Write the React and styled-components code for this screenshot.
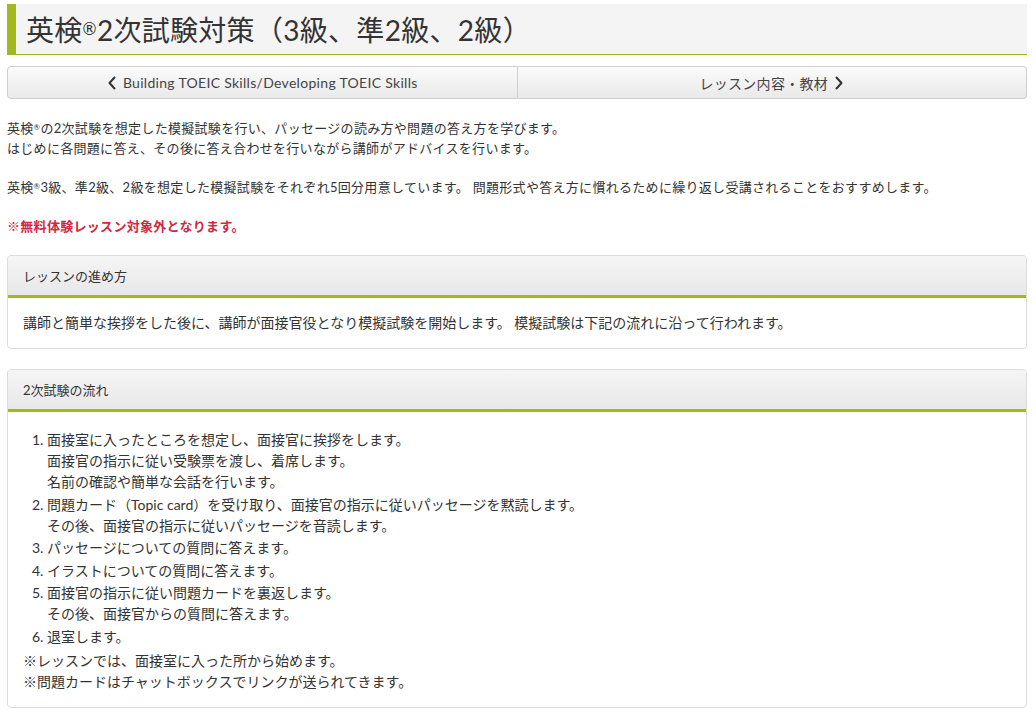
import React from "react";
import styled, { createGlobalStyle } from "styled-components";

const GlobalStyle = createGlobalStyle`
  body {
    margin: 0;
    background: #fff;
    color: #333;
    font-family: Lato, "Noto Sans CJK JP", sans-serif;
  }
`;

const Page = styled.div`
  width: 1020px;
  margin-left: 7px;
  padding-top: 4px;
`;

const Title = styled.h1`
  margin: 0;
  height: 50px;
  display: flex;
  align-items: center;
  padding-left: 10px;
  background: #f4f4f4;
  border-left: 9px solid #a3b81c;
  border-bottom: 1px solid #a3b81c;
  font-size: 28px;
  font-weight: normal;
  color: #333;
  letter-spacing: 0.3px;
`;

const Sup = styled.span`
  font-size: 0.6em;
  vertical-align: 0.35em;
  line-height: 0;
`;

const Nav = styled.div`
  display: flex;
  margin-top: 11px;
  height: 33px;
`;

const NavButton = styled.a`
  flex: 1;
  display: flex;
  align-items: center;
  justify-content: center;
  gap: 6px;
  font-size: 14px;
  letter-spacing: 0.3px;
  color: #444;
  text-decoration: none;
  background: linear-gradient(#fbfbfb, #e9e9e9);
  border: 1px solid #cfcfcf;
  border-radius: ${(p) => (p.$side === "left" ? "4px 0 0 4px" : "0 4px 4px 0")};
  ${(p) => (p.$side === "right" ? "border-left: none;" : "")}
  box-sizing: border-box;
`;

const Intro = styled.div`
  margin-top: 19px;
  font-size: 13px;
  line-height: 20px;
  letter-spacing: 0.3px;
`;

const Para = styled.p`
  margin: 0 0 19px;
`;

const Notice = styled.p`
  margin: 0;
  color: #d2283f;
  font-weight: bold;
`;

const Panel = styled.section`
  margin-top: ${(p) => p.$top || 19}px;
  border: 1px solid #dcdcdc;
  border-radius: 4px;
  overflow: hidden;
`;

const PanelHead = styled.div`
  height: 39px;
  display: flex;
  align-items: center;
  padding-left: 15px;
  font-size: 13px;
  background: linear-gradient(#f5f5f5, #e8e8e8);
  border-bottom: 3px solid #a3b81c;
`;

const PanelBody = styled.div`
  padding: ${(p) => p.$pad || "14px 15px 15px"};
  font-size: 14px;
  line-height: 21px;
`;

const Steps = styled.ol`
  margin: 0;
  padding-left: 24px;
`;

const Step = styled.li`
  margin-bottom: 1.5px;
  line-height: 21px;
`;

const Note = styled.div`
  line-height: 21px;
`;

const NoteGroup = styled.div`
  margin-top: 3px;
`;

const Chevron = ({ dir }) => (
  <svg width="10" height="14" viewBox="0 0 10 14" fill="none">
    <path
      d={dir === "left" ? "M7.5 1.5 L2.5 7 L7.5 12.5" : "M2.5 1.5 L7.5 7 L2.5 12.5"}
      stroke="#333"
      strokeWidth="2"
      strokeLinecap="round"
      strokeLinejoin="round"
    />
  </svg>
);

const steps = [
  ["面接室に入ったところを想定し、面接官に挨拶をします。", "面接官の指示に従い受験票を渡し、着席します。", "名前の確認や簡単な会話を行います。"],
  ["問題カード（Topic card）を受け取り、面接官の指示に従いパッセージを黙読します。", "その後、面接官の指示に従いパッセージを音読します。"],
  ["パッセージについての質問に答えます。"],
  ["イラストについての質問に答えます。"],
  ["面接官の指示に従い問題カードを裏返します。", "その後、面接官からの質問に答えます。"],
  ["退室します。"],
];

export default function App() {
  return (
    <>
      <GlobalStyle />
      <Page>
        <Title>
          英検<Sup>®</Sup>2次試験対策（3級、準2級、2級）
        </Title>
        <Nav>
          <NavButton $side="left" href="#">
            <Chevron dir="left" />
            Building TOEIC Skills/Developing TOEIC Skills
          </NavButton>
          <NavButton $side="right" href="#">
            レッスン内容・教材
            <Chevron dir="right" />
          </NavButton>
        </Nav>
        <Intro>
          <Para>
            英検<Sup>®</Sup>の2次試験を想定した模擬試験を行い、パッセージの読み方や問題の答え方を学びます。
            <br />
            はじめに各問題に答え、その後に答え合わせを行いながら講師がアドバイスを行います。
          </Para>
          <Para>
            英検<Sup>®</Sup>3級、準2級、2級を想定した模擬試験をそれぞれ5回分用意しています。 問題形式や答え方に慣れるために繰り返し受講されることをおすすめします。
          </Para>
          <Notice>※無料体験レッスン対象外となります。</Notice>
        </Intro>
        <Panel $top={19}>
          <PanelHead>レッスンの進め方</PanelHead>
          <PanelBody>
            講師と簡単な挨拶をした後に、講師が面接官役となり模擬試験を開始します。 模擬試験は下記の流れに沿って行われます。
          </PanelBody>
        </Panel>
        <Panel $top={20}>
          <PanelHead>2次試験の流れ</PanelHead>
          <PanelBody $pad="17px 15px 15px">
            <Steps>
              {steps.map((lines, i) => (
                <Step key={i}>
                  {lines.map((l, j) => (
                    <div key={j}>{l}</div>
                  ))}
                </Step>
              ))}
            </Steps>
            <NoteGroup>
              <Note>※レッスンでは、面接室に入った所から始めます。</Note>
              <Note>※問題カードはチャットボックスでリンクが送られてきます。</Note>
            </NoteGroup>
          </PanelBody>
        </Panel>
      </Page>
    </>
  );
}
